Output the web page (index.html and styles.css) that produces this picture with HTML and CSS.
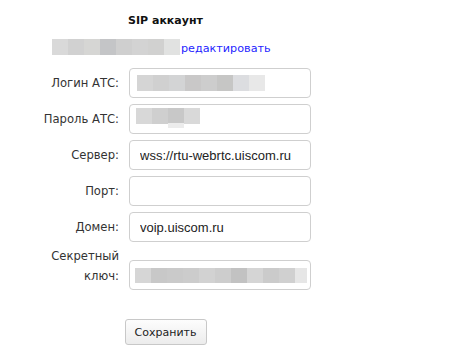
FILE: index.html
```html
<!DOCTYPE html>
<html>
<head>
  <title>SIP аккаунт</title>
  <link rel="stylesheet" href="styles.css">
</head>
<body>
  <div class="sip-panel">
    <h1 class="title">SIP аккаунт</h1>

    <div class="account-line">
      <span class="mosaic wide">
        <i style="background:#d9d9d9"></i><i style="background:#d1d1d1"></i><i style="background:#d6d6d4"></i><i style="background:#c4c5c7"></i><i style="background:#cfcfcf"></i><i style="background:#d3d3d3"></i><i style="background:#d1d1d0"></i><i style="background:#e1e2e1"></i>
      </span>
      <a href="#" class="edit-link">редактировать</a>
    </div>

    <!-- SIP settings form -->
    <form class="sip-form">
      <label class="field-label" for="login">Логин АТС:</label>
      <div class="field-wrap">
        <input type="text" id="login" class="field">
        <span class="mosaic over login-blur">
          <i style="background:#d5d5d5"></i><i style="background:#d0d0d0"></i><i style="background:#d3d4d5"></i><i style="background:#c9c8c8"></i><i style="background:#cdcdcd"></i><i style="background:#c6c6c5"></i><i style="background:#dcdde0"></i><i style="background:#e8e8e8"></i>
        </span>
      </div>

      <label class="field-label" for="password">Пароль АТС:</label>
      <div class="field-wrap">
        <input type="text" id="password" class="field">
        <span class="mosaic over pass-blur">
          <i style="background:#d8d8d8"></i><i style="background:#cfcfcf"></i><i style="background:#c8c8c8"></i><i style="background:#d9d9d9"></i>
        </span>
        <span class="mosaic over pass-tail"><i style="background:#ececec"></i></span>
      </div>

      <label class="field-label" for="server">Сервер:</label>
      <input type="text" id="server" class="field" value="wss://rtu-webrtc.uiscom.ru">

      <label class="field-label" for="port">Порт:</label>
      <input type="text" id="port" class="field">

      <label class="field-label" for="domain">Домен:</label>
      <input type="text" id="domain" class="field" value="voip.uiscom.ru">

      <label class="field-label two-line" for="secret">Секретный<br>ключ:</label>
      <div class="field-wrap secret-wrap">
        <input type="text" id="secret" class="field">
        <span class="mosaic over secret-blur">
          <i style="background:#d6d6d6"></i><i style="background:#c8c8c8"></i><i style="background:#cacaca"></i><i style="background:#cccccc"></i><i style="background:#d2d2d2"></i><i style="background:#cdcdcd"></i><i style="background:#c2c2c2"></i><i style="background:#d5d5d5"></i><i style="background:#cbcbcb"></i><i style="background:#d0d0d0"></i><i style="background:#e6e6e6" class="part"></i>
        </span>
      </div>
    </form>

    <div class="actions">
      <button class="save-btn" type="button">Сохранить</button>
    </div>
  </div>
</body>
</html>
```

FILE: styles.css
```css
/* SIP account settings */
body {
  margin: 8px;
  font-family: "DejaVu Sans", sans-serif;
  font-size: 12px;
  color: #333;
  background: #fff;
}
.sip-panel {
  width: 315px;
}
.title {
  margin: 5px 0 0;
  font-size: 11px;
  line-height: 16px;
  font-weight: bold;
  color: #111;
  text-align: center;
}
.account-line {
  display: flex;
  align-items: flex-start;
  margin-top: 10px;
  padding-left: 44px;
}
.edit-link {
  padding-top: 2px;
  font-size: 11.2px;
  line-height: 16px;
  color: #1f1fff;
  text-decoration: none;
  margin-left: 1px;
}
.mosaic {
  display: flex;
}
.mosaic i {
  display: block;
  width: 16px;
  height: 16px;
}
.sip-form {
  display: grid;
  grid-template-columns: 111px 182px;
  grid-template-rows: 30px 30px 30px 30px 30px 42px;
  column-gap: 10px;
  row-gap: 6px;
  margin-top: 11px;
}
.field-label {
  align-self: center;
  text-align: right;
  font-size: 11.6px;
  line-height: 16px;
  color: #333;
}
.field-label.two-line {
  align-self: start;
  line-height: 20px;
  margin-top: -2px;
}
.field-wrap {
  position: relative;
}
.secret-wrap {
  margin-top: 12px;
}
.field {
  box-sizing: border-box;
  width: 182px;
  height: 30px;
  margin: 0;
  padding: 0 10px;
  border: 1px solid #cfcfcf;
  border-radius: 4px;
  font-family: "Liberation Sans", Arial, sans-serif;
  font-size: 13px;
  color: #222;
  background: #fff;
}
.sip-form > .field {
  align-self: start;
}
.over {
  position: absolute;
}
.login-blur {
  left: 8px;
  top: 7px;
}
.pass-blur {
  left: 7px;
  top: 4px;
}
.pass-tail {
  left: 39px;
  top: 19px;
}
.pass-tail i {
  height: 5px;
}
.secret-blur {
  left: 6px;
  top: 8px;
}
.secret-blur i {
  height: 15px;
}
.secret-blur i.part {
  width: 12px;
}
.actions {
  margin-top: 29px;
  text-align: center;
}
.save-btn {
  width: 82px;
  height: 26px;
  padding: 0;
  border: 1px solid #c8c8c8;
  border-radius: 3px;
  background: linear-gradient(#fdfdfd, #ececec);
  font-family: "DejaVu Sans", sans-serif;
  font-size: 11px;
  color: #222;
  cursor: pointer;
}
```
